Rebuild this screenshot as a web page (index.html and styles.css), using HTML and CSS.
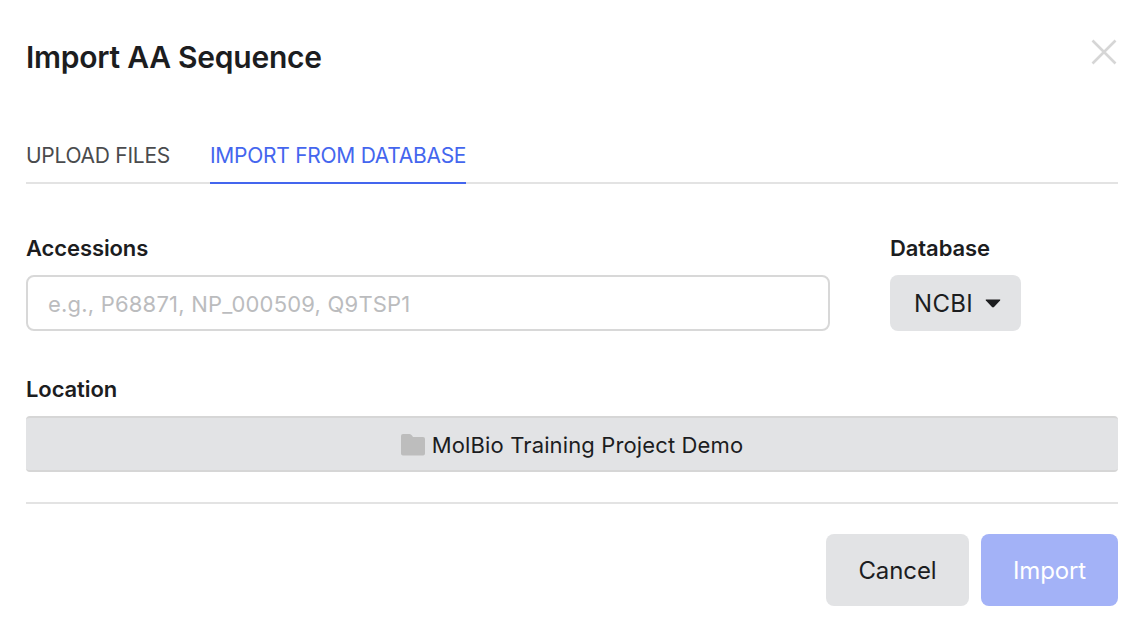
FILE: index.html
```html
<!DOCTYPE html>
<html lang="en">
<head>
<meta charset="utf-8">
<title>Import AA Sequence</title>
<link rel="stylesheet" href="styles.css">
</head>
<body>
<main class="dialog">
  <header class="head">
    <h1 class="title">Import AA Sequence</h1>
    <button class="close" aria-label="Close">
      <svg width="26" height="26" viewBox="0 0 26 26"><path d="M1.500 1.500L24.500 24.500M24.500 1.500L1.500 24.500" fill="none" stroke="#d6d6d6" stroke-width="2.600"/></svg>
    </button>
  </header>
  <nav class="tabs">
    <span class="tab">UPLOAD FILES</span>
    <span class="tab active">IMPORT FROM DATABASE</span>
  </nav>
  <section class="row">
    <div class="field grow">
      <label class="label">Accessions</label>
      <div class="input">e.g., P68871, NP_000509, Q9TSP1</div>
    </div>
    <div class="field">
      <label class="label">Database</label>
      <button class="select">NCBI
        <svg width="16" height="9" viewBox="0 0 16 9"><path d="M1.200 0.500H14.800Q15.800 0.500 15.100 1.400L9 8Q8 8.800 7 8L0.900 1.400Q0.200 0.500 1.200 0.500Z" fill="#1c1d1f"/></svg>
      </button>
    </div>
  </section>
  <section class="field location-field">
    <label class="label">Location</label>
    <button class="location">
      <svg width="24" height="22" viewBox="0 0 24 22"><path d="M2 0H8.500Q10 0 11 1.500L12 3H22Q24 3 24 5V19.500Q24 21.500 22 21.500H2Q0 21.500 0 19.500V2Q0 0 2 0Z" fill="#bdbdbd"/></svg>
      MolBio Training Project Demo
    </button>
  </section>
  <footer class="foot">
    <button class="btn cancel">Cancel</button>
    <button class="btn import">Import</button>
  </footer>
</main>
</body>
</html>
```
FILE: styles.css
```css
* { box-sizing: border-box; }
html, body { margin: 0; background: #fff; }
body { width: 1148px; height: 636px; overflow: hidden; font-family: Inter, Lato, sans-serif; color: #1c1d1f; font-variant-ligatures: none; }
button { font: inherit; color: inherit; border: 0; padding: 0; cursor: pointer; }
.dialog { padding: 0 30px 0 26px; display: flex; flex-direction: column; }
.head { height: 116px; padding-top: 39px; display: flex; justify-content: space-between; align-items: flex-start; }
.title { margin: 0; font-size: 30px; line-height: 36px; font-weight: 600; letter-spacing: -0.25px; }
.close { background: none; width: 26px; height: 26px; display: flex; margin: 0 1px 0 0; }
.tabs { height: 68px; display: flex; gap: 40px; border-bottom: 2px solid #e3e3e3; }
.tab { height: 68px; padding-top: 25px; font-size: 21px; line-height: 30px; color: #4a4b4d; letter-spacing: -0.27px; }
.tab.active { color: #4466ee; border-bottom: 2px solid #4466ee; }
.row { display: flex; gap: 60px; padding-top: 50px; }
.field { display: flex; flex-direction: column; gap: 12px; }
.grow { flex: none; width: 804px; }
.label { font-size: 22px; line-height: 29px; font-weight: 600; letter-spacing: -0.1px; }
.input { height: 56px; border: 2px solid #d8d8d8; border-radius: 8px; padding: 2px 20px 0; display: flex; align-items: center; font-size: 22px; letter-spacing: 0.2px; color: #bbbcbe; }
.select { width: 131px; height: 56px; background: #e2e3e5; border-radius: 8px; font-size: 24px; letter-spacing: 0.3px; display: flex; align-items: center; gap: 12px; padding-left: 24px; }
.location-field { padding-top: 44px; }
.location { height: 56px; background: #e2e3e5; border-top: 2px solid #d6d6d6; border-bottom: 2px solid #d6d6d6; border-radius: 4px; padding-top: 2px; font-size: 22px; letter-spacing: 0.13px; display: flex; align-items: center; justify-content: center; gap: 7px; }
.foot { margin-top: 30px; padding-top: 30px; border-top: 2px solid #e3e3e3; display: flex; justify-content: flex-end; gap: 12px; }
.btn { height: 72px; border-radius: 8px; font-size: 24px; letter-spacing: -0.1px; }
.cancel { width: 143px; background: #e2e3e5; }
.import { width: 137px; background: #a3b2f7; color: #fff; }
```
